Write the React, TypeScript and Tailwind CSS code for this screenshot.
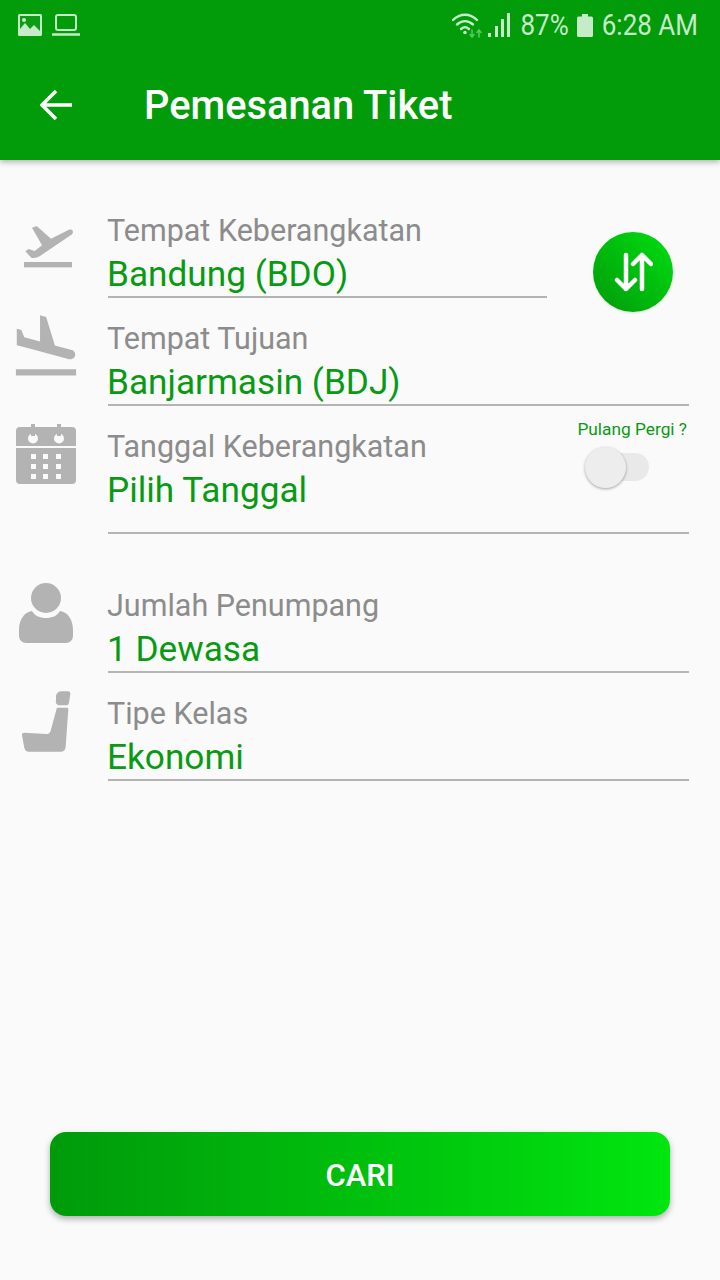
import React from 'react';

const ImageIcon = () => (
  <svg viewBox="0 0 24 22" className="w-6 h-[22px]">
    <rect x="0" y="0" width="24" height="22" rx="1.5" fill="#C6EBC8" />
    <rect x="2" y="2" width="20" height="18" fill="#0B9E14" />
    <path d="M2 20v-5l5-6 5 6 4-4 6 6v3z" fill="#C6EBC8" />
    <circle cx="6" cy="6" r="2" fill="#C6EBC8" />
  </svg>
);

const LaptopIcon = () => (
  <svg viewBox="0 0 28 22" className="w-7 h-[22px]" fill="none" stroke="#C6EBC8" strokeWidth="2">
    <rect x="4" y="1" width="20" height="15" rx="2" />
    <path d="M0 20.5h28" strokeWidth="2.500" />
  </svg>
);

const WifiIcon = () => (
  <svg viewBox="0 0 30 26" className="w-[30px] h-[26px]" fill="none" stroke="#C6EBC8" strokeWidth="2.4" strokeLinecap="round">
    <path d="M1 8c7-7 17-7 24 0" />
    <path d="M5 12.500c5-4.500 11-4.500 16 0" />
    <path d="M9 17c3-2.500 5-2.500 8 0" />
    <circle cx="13" cy="20.500" r="1.800" fill="#C6EBC8" stroke="none" />
    <path d="M20 18v7M18 22.500l2 2.500 2-2.500" stroke="#5CC765" strokeWidth="1.500" />
    <path d="M27 25v-7M25 20.500l2-2.500 2 2.500" stroke="#5CC765" strokeWidth="1.500" />
  </svg>
);

const SignalIcon = () => (
  <svg viewBox="0 0 24 24" className="w-6 h-6" fill="#C6EBC8">
    <rect x="2" y="20" width="3" height="4" />
    <rect x="9" y="13" width="3" height="11" />
    <rect x="15" y="6" width="3" height="18" />
    <rect x="21" y="0" width="3" height="24" />
  </svg>
);

const BatteryIcon = () => (
  <svg viewBox="0 0 16 23" className="w-4 h-[23px]" fill="#C6EBC8">
    <path d="M5 0h6v2.500h3.500a1.500 1.500 0 0 1 1.500 1.500v17.500a1.500 1.500 0 0 1-1.500 1.500h-13a1.500 1.500 0 0 1-1.500-1.500v-17.500a1.500 1.500 0 0 1 1.500-1.500h3.500z" />
  </svg>
);

const TakeoffIcon = () => (
  <svg viewBox="0 0 192 162" className="w-16 h-[54px] ml-4 mt-[28px]" fill="#B3B3B3">
    <path d="M48 29l14-5 43 38 52-26c5-2 11-2 13 2 2 5 0 10-5 13L72 114c-8 5-18 7-26 5L28 100l10-7 18 6 22-17z" />
    <rect x="24" y="132" width="144" height="16" />
  </svg>
);

const LandIcon = () => (
  <svg viewBox="0 0 24 24" className="w-[76px] h-[76px] ml-[8px] mt-[11px]" fill="#B3B3B3">
    <path d="M2.500 19h19v2h-19zm7.180-5.730l4.350 1.160 5.310 1.420c.8.21 1.620-.26 1.840-1.060.21-.8-.26-1.620-1.060-1.840l-5.310-1.420-2.760-9.020L10.120 2v8.280L5.150 8.950l-.93-2.320-1.450-.39v5.170l1.600.43 5.310 1.430z" />
  </svg>
);

const CalendarIcon = () => (
  <svg viewBox="0 0 60 60" className="w-[60px] h-[60px] ml-[16px] mt-[18px]">
    <path d="M0 22V7a4 4 0 0 1 4-4h11V0h4v3h22V0h4v3h11a4 4 0 0 1 4 4v15z" fill="#B3B3B3" />
    <path d="M0 24h60v32a4 4 0 0 1-4 4H4a4 4 0 0 1-4-4z" fill="#B3B3B3" />
    <circle cx="17" cy="14.500" r="5" fill="#FAFAFA" />
    <circle cx="43" cy="14.500" r="5" fill="#FAFAFA" />
    <rect x="15" y="2" width="4" height="10" fill="#B3B3B3" />
    <rect x="41" y="2" width="4" height="10" fill="#B3B3B3" />
    <g fill="#FAFAFA">
      <rect x="15" y="30" width="5" height="5" />
      <rect x="27" y="30" width="5" height="5" />
      <rect x="40" y="30" width="5" height="5" />
      <rect x="15" y="40" width="5" height="5" />
      <rect x="27" y="40" width="5" height="5" />
      <rect x="40" y="40" width="5" height="5" />
      <rect x="15" y="50" width="5" height="5" />
      <rect x="27" y="50" width="5" height="5" />
      <rect x="40" y="50" width="5" height="5" />
    </g>
  </svg>
);

const PersonIcon = () => (
  <svg viewBox="0 0 56 60" className="w-14 h-[60px] ml-[18px] mt-[18px]" fill="#B3B3B3">
    <circle cx="28" cy="15" r="15" />
    <path d="M14 28c3 5 8 7 14 7s11-2 14-7c8 1 13 9 13 19v6a7 7 0 0 1-7 7H8a7 7 0 0 1-7-7v-6c0-10 5-18 13-19z" />
  </svg>
);

const SeatIcon = () => (
  <svg viewBox="0 0 192 216" className="w-16 h-[72px] ml-4 mt-[12px]" fill="#B3B3B3">
    <path d="M120 32c2-8 8-13 16-13h20c5 0 7 3 7 8l-4 26c-1 5-4 8-9 8h-20c-8 0-12-7-10-15z" />
    <path d="M124 68h28c3 0 5 2 5 5l-8 112c-1 10-6 15-15 15H38c-7 0-11-4-13-11l-7-38c-1-5 2-8 7-8l66 4c7 0 11-3 13-10l17-63c1-4 2-6 3-6z" />
  </svg>
);

interface FieldProps {
  label: string;
  value: string;
  className?: string;
}

const Field: React.FC<FieldProps> = ({ label, value, className }) => (
  <div className={`pt-[25px] border-b-2 border-[#B4B4B4] ${className ?? ''}`}>
    <p className="-ml-px h-8 leading-8 text-[30.5px] text-[#8C8C8C] whitespace-nowrap">{label}</p>
    <p className="-ml-px mt-[5px] h-11 leading-[44px] text-[35.2px] text-[#089A12] whitespace-nowrap">{value}</p>
  </div>
);

export default function App() {
  return (
    <div className="w-[720px] h-[1280px] overflow-hidden flex flex-col bg-[#FAFAFA] font-[Roboto,sans-serif]">
      <header className="h-40 shrink-0 bg-[#029B0A] shadow-[0_2px_6px_rgba(0,0,0,0.3)] flex flex-col">
        <div className="h-[50px] pl-[18px] pr-[22px] flex items-center text-[#C6EBC8] text-[26px]">
          <ImageIcon />
          <span className="ml-[10px]"><LaptopIcon /></span>
          <span className="ml-auto"><WifiIcon /></span>
          <span className="ml-[4px]"><SignalIcon /></span>
          <span className="ml-[10px] scale-y-[1.13]">87%</span>
          <span className="ml-[8px]"><BatteryIcon /></span>
          <span className="ml-[9px] scale-y-[1.13]">6:28 AM</span>
        </div>
        <div className="flex-1 flex items-center">
          <svg viewBox="0 0 32 32" className="w-8 h-8 ml-[40px]" fill="none" stroke="#FFFFFF" strokeWidth="3.500">
            <path d="M32 16H3M16 2L2 16l14 14" />
          </svg>
          <h1 className="ml-[72px] pt-[2px] text-[39.8px] font-medium text-white">Pemesanan Tiket</h1>
        </div>
      </header>

      <main className="pt-[30px] flex flex-col">
        <div className="flex relative">
          <div className="w-[108px] shrink-0"><TakeoffIcon /></div>
          <Field label="Tempat Keberangkatan" value="Bandung (BDO)" className="w-[439px]" />
          <button className="absolute left-[593px] top-[42px] w-20 h-20 rounded-full bg-gradient-to-tr from-[#009A0A] to-[#00E010] flex items-center justify-center shadow-sm">
            <svg viewBox="0 0 40 40" className="w-10 h-10" fill="none" stroke="#FFFFFF" strokeWidth="4.500" strokeLinecap="round" strokeLinejoin="round">
              <path d="M13 3v34M4 28l9 9 9-9" />
              <path d="M29 37V3M20 12l9-9 9 9" />
            </svg>
          </button>
        </div>
        <div className="flex">
          <div className="w-[108px] shrink-0"><LandIcon /></div>
          <Field label="Tempat Tujuan" value="Banjarmasin (BDJ)" className="w-[581px]" />
        </div>
        <div className="flex relative">
          <div className="w-[108px] shrink-0"><CalendarIcon /></div>
          <Field label="Tanggal Keberangkatan" value="Pilih Tanggal" className="w-[581px] pb-[20px]" />
          <div className="absolute right-[33px] top-[12px] flex flex-col items-center">
            <p className="text-[17.3px] leading-[22px] text-[#089A12] whitespace-nowrap">Pulang Pergi ?</p>
            <div className="relative mt-[7px] w-[64px] h-[41px] self-start ml-[8px]">
              <div className="absolute left-[6px] right-0 top-[6px] h-[28px] rounded-full bg-[#E9E9E9]" />
              <div className="absolute left-0 top-0 w-[41px] h-[41px] rounded-full bg-[#EDEDED] shadow-[0_1px_3px_rgba(0,0,0,0.35)]" />
            </div>
          </div>
        </div>
        <div className="flex mt-[31px]">
          <div className="w-[108px] shrink-0"><PersonIcon /></div>
          <Field label="Jumlah Penumpang" value="1 Dewasa" className="w-[581px]" />
        </div>
        <div className="flex">
          <div className="w-[108px] shrink-0"><SeatIcon /></div>
          <Field label="Tipe Kelas" value="Ekonomi" className="w-[581px]" />
        </div>
      </main>

      <button className="mt-auto mb-[64px] mx-[50px] h-[84px] shrink-0 rounded-[16px] pt-1 bg-gradient-to-r from-[#009A0A] to-[#00E60F] text-white text-[31px] font-medium shadow-[0_3px_6px_rgba(0,0,0,0.3)]">
        CARI
      </button>
    </div>
  );
}
